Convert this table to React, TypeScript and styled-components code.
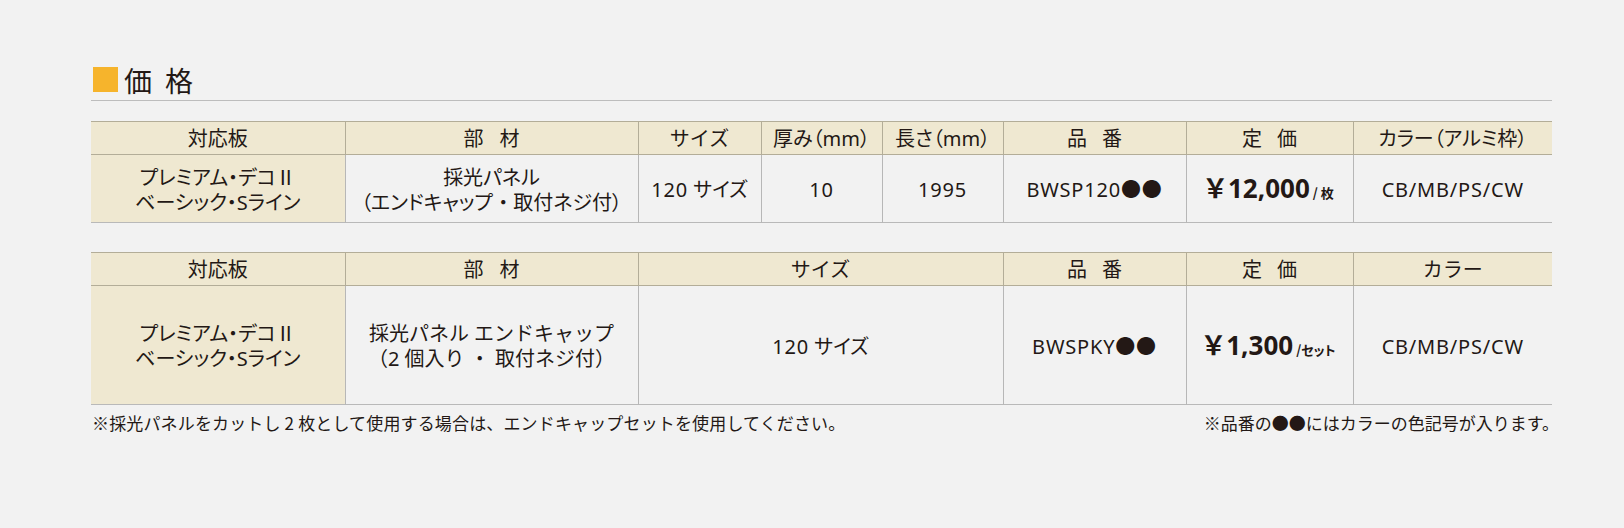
import React from "react";
import styled, { createGlobalStyle } from "styled-components";

const Global = createGlobalStyle`
  html, body { margin: 0; padding: 0; background: #f2f2f2; }
  body {
    font-family: "Noto Sans", "Noto Sans CJK JP", sans-serif;
    color: #231815;
  }
`;

const Page = styled.div`
  width: 1624px;
  height: 528px;
  box-sizing: border-box;
  padding: 64px 72px 0 91px;
`;

const Title = styled.h2`
  margin: 0;
  width: 1461px;
  height: 37px;
  box-sizing: border-box;
  padding: 3px 0 0 2px;
  display: flex;
  align-items: flex-start;
  border-bottom: 1px solid #bdbdbd;
  font-family: "Noto Sans CJK JP", sans-serif;
  font-weight: 400;
  font-size: 28px;
  line-height: 27px;
  letter-spacing: 13px;
`;

const Square = styled.span`
  width: 25px;
  height: 25px;
  background: #f6b42c;
  margin-right: 6px;
  flex: none;
`;

const Table = styled.table<{ $top: number }>`
  width: 1461px;
  margin-top: ${(p) => p.$top}px;
  border-collapse: collapse;
  table-layout: fixed;
  border-top: 1px solid #b3ad98;
  border-bottom: 1px solid #b9b9b9;
`;

const Col = styled.col<{ $w: number }>`
  width: ${(p) => p.$w}px;
`;

const HeadRow = styled.tr`
  height: 33px;
`;

const BodyRow = styled.tr<{ $h: number }>`
  height: ${(p) => p.$h}px;
`;

const Th = styled.th<{ $ls?: number; $palt?: boolean }>`
  padding: 0 0 0 ${(p) => p.$ls ?? 0}px;
  background: #efe8d1;
  border-bottom: 1px solid #b3ad98;
  border-left: 1px solid #b3ad98;
  font-family: "Noto Sans CJK JP", sans-serif;
  font-weight: 400;
  font-size: 20px;
  line-height: 24px;
  letter-spacing: ${(p) => p.$ls ?? 0}px;
  font-feature-settings: ${(p) => (p.$palt ? '"palt"' : "normal")};
  text-align: center;
  vertical-align: middle;
  &:first-child { border-left: none; }
`;

const Mm = styled.span`
  font-family: "Noto Sans", sans-serif;
`;

const Td = styled.td<{ $beige?: boolean; $palt?: boolean }>`
  padding: 2px 0 0;
  background: ${(p) => (p.$beige ? "#efe8d1" : "#f2f2f2")};
  border-left: 1px solid #b7b7b7;
  font-size: 20px;
  line-height: 25px;
  font-feature-settings: ${(p) => (p.$palt === false ? "normal" : '"palt"')};
  text-align: center;
  vertical-align: middle;
  &:first-child { border-left: none; }
`;

const Code = styled.span`
  letter-spacing: 0.8px;
`;

const Price = styled.span`
  font-weight: 700;
  font-size: 26px;
  line-height: 26px;
`;

const Yen = styled.span`
  font-family: "Noto Sans CJK JP", sans-serif;
  margin-right: 3px;
`;

const Unit = styled.span`
  font-family: "Noto Sans CJK JP", sans-serif;
  font-weight: 700;
  font-size: 13px;
  margin-left: 3px;
`;

const Notes = styled.div`
  width: 1461px;
  margin-top: 7px;
  display: flex;
  justify-content: space-between;
  font-family: "Noto Sans CJK JP", sans-serif;
  font-size: 17px;
  line-height: 22px;
  padding: 0 0 0 1px;
  box-sizing: border-box;
`;

const Note = styled.span<{ $end?: boolean }>`
  letter-spacing: ${(p) => (p.$end ? "0" : "0.15px")};
  margin-right: ${(p) => (p.$end ? "-7px" : "0")};
`;

type Head = { label: React.ReactNode; ls?: number; palt?: boolean };

const h1: Head[] = [
  { label: "対応板" },
  { label: "部材", ls: 16 },
  { label: "サイズ" },
  { label: <>厚み（<Mm>mm</Mm>）</>, palt: true },
  { label: <>長さ（<Mm>mm</Mm>）</>, palt: true },
  { label: "品番", ls: 15 },
  { label: "定価", ls: 15 },
  { label: "カラー（アルミ枠）", palt: true },
];
const w1 = [254, 293, 123, 121, 121, 183, 167, 199];
const h2: Head[] = [
  { label: "対応板" },
  { label: "部材", ls: 16 },
  { label: "サイズ" },
  { label: "品番", ls: 15 },
  { label: "定価", ls: 15 },
  { label: "カラー" },
];
const w2 = [254, 293, 365, 183, 167, 199];

function HeadCells({ heads }: { heads: Head[] }) {
  return (
    <HeadRow>
      {heads.map((h, i) => (
        <Th key={i} $ls={h.ls} $palt={h.palt}>
          {h.label}
        </Th>
      ))}
    </HeadRow>
  );
}

function Boards() {
  return (
    <Td $beige>
      プレミアム・デコⅡ
      <br />
      ベーシック・Sライン
    </Td>
  );
}

export default function App() {
  return (
    <>
      <Global />
      <Page>
        <Title>
          <Square />
          価格
        </Title>

        <Table $top={20}>
          <colgroup>
            {w1.map((w, i) => (
              <Col key={i} $w={w} />
            ))}
          </colgroup>
          <thead>
            <HeadCells heads={h1} />
          </thead>
          <tbody>
            <BodyRow $h={68}>
              <Boards />
              <Td>
                採光パネル
                <br />
                （エンドキャップ ・ 取付ネジ付）
              </Td>
              <Td>
                <Code>120</Code> サイズ
              </Td>
              <Td>
                <Code>10</Code>
              </Td>
              <Td>
                <Code>1995</Code>
              </Td>
              <Td>
                <Code>BWSP120●●</Code>
              </Td>
              <Td>
                <Price>
                  <Yen>￥</Yen>12,000
                </Price>
                <Unit>/ 枚</Unit>
              </Td>
              <Td>
                <Code>CB/MB/PS/CW</Code>
              </Td>
            </BodyRow>
          </tbody>
        </Table>

        <Table $top={29}>
          <colgroup>
            {w2.map((w, i) => (
              <Col key={i} $w={w} />
            ))}
          </colgroup>
          <thead>
            <HeadCells heads={h2} />
          </thead>
          <tbody>
            <BodyRow $h={119}>
              <Boards />
              <Td $palt={false}>
                採光パネル エンドキャップ
                <br />
                （2 個入り ・ 取付ネジ付）
              </Td>
              <Td>
                <Code>120</Code> サイズ
              </Td>
              <Td>
                <Code>BWSPKY●●</Code>
              </Td>
              <Td>
                <Price>
                  <Yen>￥</Yen>1,300
                </Price>
                <Unit>/セット</Unit>
              </Td>
              <Td>
                <Code>CB/MB/PS/CW</Code>
              </Td>
            </BodyRow>
          </tbody>
        </Table>

        <Notes>
          <Note>※採光パネルをカットし 2 枚として使用する場合は、エンドキャップセットを使用してください。</Note>
          <Note $end>※品番の●●にはカラーの色記号が入ります。</Note>
        </Notes>
      </Page>
    </>
  );
}
